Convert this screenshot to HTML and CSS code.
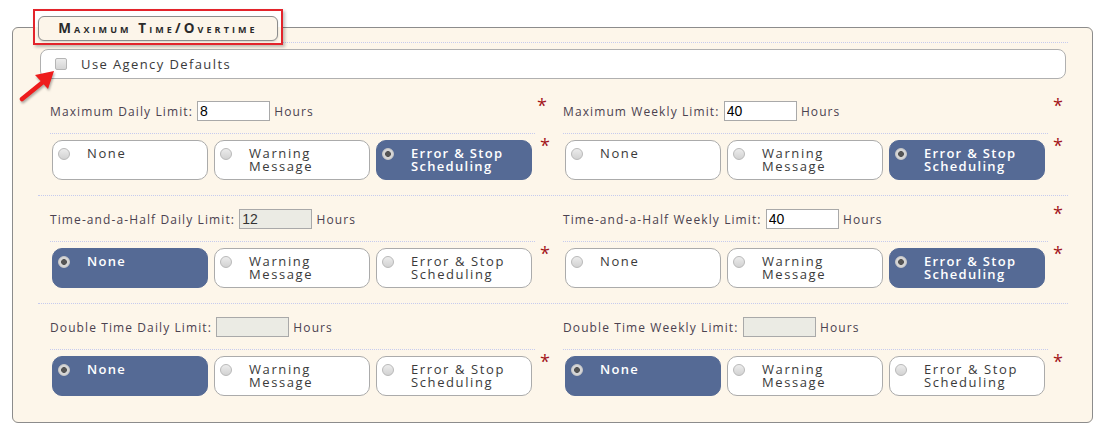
FILE: index.html
```html
<!DOCTYPE html>
<html lang="en">
<head>
<meta charset="UTF-8">
<title>Maximum Time/Overtime</title>
<link rel="stylesheet" href="styles.css">
</head>
<body>
<fieldset class="panel">
  <legend class="panel-title"><span class="title-box">Maximum Time/Overtime</span></legend>

  <div class="agency">
    <label class="agency-box"><span class="check"></span>Use Agency Defaults</label>
  </div>

  <div class="section first">
    <div class="limit">
      <div class="line">
        <div class="main field">Maximum Daily Limit: <input class="hours" type="text" value="8"> Hours</div>
        <span class="req">*</span>
      </div>
      <div class="line">
        <div class="main choices">
          <label class="choice"><span class="radio"></span><span class="text">None</span></label>
          <label class="choice"><span class="radio"></span><span class="text">Warning Message</span></label>
          <label class="choice on"><span class="radio"></span><span class="text">Error &amp; Stop Scheduling</span></label>
        </div>
        <span class="req">*</span>
      </div>
    </div>
    <div class="limit">
      <div class="line">
        <div class="main field">Maximum Weekly Limit: <input class="hours" type="text" value="40"> Hours</div>
        <span class="req">*</span>
      </div>
      <div class="line">
        <div class="main choices">
          <label class="choice"><span class="radio"></span><span class="text">None</span></label>
          <label class="choice"><span class="radio"></span><span class="text">Warning Message</span></label>
          <label class="choice on"><span class="radio"></span><span class="text">Error &amp; Stop Scheduling</span></label>
        </div>
        <span class="req">*</span>
      </div>
    </div>
  </div>

  <div class="section">
    <div class="limit">
      <div class="line">
        <div class="main field">Time-and-a-Half Daily Limit: <input class="hours" type="text" value="12" disabled> Hours</div>
        <span class="req"></span>
      </div>
      <div class="line">
        <div class="main choices">
          <label class="choice on"><span class="radio"></span><span class="text">None</span></label>
          <label class="choice"><span class="radio"></span><span class="text">Warning Message</span></label>
          <label class="choice"><span class="radio"></span><span class="text">Error &amp; Stop Scheduling</span></label>
        </div>
        <span class="req">*</span>
      </div>
    </div>
    <div class="limit">
      <div class="line">
        <div class="main field">Time-and-a-Half Weekly Limit: <input class="hours" type="text" value="40"> Hours</div>
        <span class="req">*</span>
      </div>
      <div class="line">
        <div class="main choices">
          <label class="choice"><span class="radio"></span><span class="text">None</span></label>
          <label class="choice"><span class="radio"></span><span class="text">Warning Message</span></label>
          <label class="choice on"><span class="radio"></span><span class="text">Error &amp; Stop Scheduling</span></label>
        </div>
        <span class="req">*</span>
      </div>
    </div>
  </div>

  <div class="section last">
    <div class="limit">
      <div class="line">
        <div class="main field">Double Time Daily Limit: <input class="hours" type="text" value="" disabled> Hours</div>
        <span class="req"></span>
      </div>
      <div class="line">
        <div class="main choices">
          <label class="choice on"><span class="radio"></span><span class="text">None</span></label>
          <label class="choice"><span class="radio"></span><span class="text">Warning Message</span></label>
          <label class="choice"><span class="radio"></span><span class="text">Error &amp; Stop Scheduling</span></label>
        </div>
        <span class="req">*</span>
      </div>
    </div>
    <div class="limit">
      <div class="line">
        <div class="main field">Double Time Weekly Limit: <input class="hours" type="text" value="" disabled> Hours</div>
        <span class="req"></span>
      </div>
      <div class="line">
        <div class="main choices">
          <label class="choice on"><span class="radio"></span><span class="text">None</span></label>
          <label class="choice"><span class="radio"></span><span class="text">Warning Message</span></label>
          <label class="choice"><span class="radio"></span><span class="text">Error &amp; Stop Scheduling</span></label>
        </div>
        <span class="req">*</span>
      </div>
    </div>
  </div>
</fieldset>

<!-- annotation arrow pointing at the checkbox -->
<svg class="pointer" width="44" height="42" viewBox="0 0 44 42">
  <line x1="5" y1="35" x2="26" y2="18" stroke="#ee1c1c" stroke-width="4.5" stroke-linecap="round"/>
  <polygon points="37,7 31,25 18,11" fill="#ee1c1c"/>
</svg>
</body>
</html>
```

FILE: styles.css
```css
body {
  margin:0;
  background:#fff;
  font-family:'Open Sans', 'DejaVu Sans', sans-serif;
  color:#333;
}
.panel {
  min-width:0;
  margin:9px 12px 0 12px;
  padding:0 24px 11px 25px;
  border:1px solid #8c8c8c;
  border-radius:6px;
  background:#fdf6ea;
}
.panel-title {
  position:relative;
  z-index:1;
  margin-left:-5px;
  padding:5px 3px 2px 3px;
  border:2px solid #e3242b;
  background:linear-gradient(to bottom, #fff 16px, #fdf6ea 16px);
  box-shadow:2px 2px 3px rgba(0,0,0,0.25);
}
.title-box {
  display:block;
  width:238px;
  height:23px;
  line-height:23px;
  text-align:center;
  border:1px solid #8c8c8c;
  border-radius:6px;
  background:#fcf5ea;
  box-shadow:0 1px 2px rgba(0,0,0,0.15);
  font-size:13.5px;
  font-weight:bold;
  font-variant:small-caps;
  letter-spacing:3.1px;
  color:#2a2a2a;
}

.agency {
  margin-top:-3px;
  padding-top:6px;
  border-top:1px dotted #c6cbee;
}
.agency-box {
  display:flex;
  align-items:center;
  height:30px;
  box-sizing:border-box;
  margin:0 2px;
  padding-left:14px;
  border:1px solid #b0b0b0;
  border-radius:8px;
  background:#fff;
  font-size:13px;
  letter-spacing:1.4px;
  color:#3a3a3a;
}
.check {
  width:10px;
  height:10px;
  margin-right:14px;
  border:1px solid #b5b5b5;
  border-radius:2px;
  background:linear-gradient(#ececec, #d4d4d4);
}

.section {
  display:grid;
  grid-template-columns:513px 1fr;
  padding:13px 0 15px;
  border-bottom:1px dotted #c6cbee;
}
.section.first {padding-top:22px;}
.section.last {border-bottom:none;}
.limit {padding-left:12px;}
.line {display:flex; align-items:flex-start;}
.main {width:485px; box-sizing:border-box;}
.req {
  width:14px;
  margin-left:5px;
  margin-top:-5px;
  font-size:18px;
  line-height:18px;
  color:#a3151a;
}

.field {
  display:flex;
  align-items:center;
  height:20px;
  font-size:12px;
  letter-spacing:1.1px;
  color:#4b4250;
  white-space:pre;
}
.hours {
  width:73px;
  height:20px;
  box-sizing:border-box;
  margin:0;
  padding:0 2px;
  border:1px solid #a9a9a9;
  background:#fff;
  font-family:'Liberation Sans', Arial, sans-serif;
  font-size:14px;
  color:#000;
}
.hours:disabled {background:#ebebe4; color:#333;}

.choices {
  display:flex;
  gap:6px;
  margin-top:12px;
  padding:6px 3px 0 2px;
  border-top:1px dotted #c6cbee;
}
.choices + .req {margin-top:15px;}
.choice {
  display:flex;
  align-items:flex-start;
  width:156px;
  height:40px;
  box-sizing:border-box;
  padding:6px 0 0 5px;
  border:1px solid #ababab;
  border-radius:10px;
  background:#fff;
  font-size:13px;
  line-height:13px;
  letter-spacing:1.6px;
  color:#3a3a3a;
}
.choice .radio {
  flex:none;
  width:10px;
  height:10px;
  margin-top:1px;
  margin-right:17px;
  border:1px solid #b9b9b9;
  border-radius:50%;
  background:linear-gradient(#ececec, #d2d2d2);
}
.choice.on {
  background:#556a95;
  border-color:#556a95;
  color:#fff;
  font-weight:600;
  letter-spacing:1.3px;
}
.choice.on .radio {
  border-color:#c9c9c9;
  background:radial-gradient(circle, #555 0 2.6px, #d6d6d6 3.2px);
}

.pointer {
  position:absolute;
  left:17px;
  top:64px;
  filter:drop-shadow(1px 2px 1px rgba(0,0,0,0.3));
}
```
